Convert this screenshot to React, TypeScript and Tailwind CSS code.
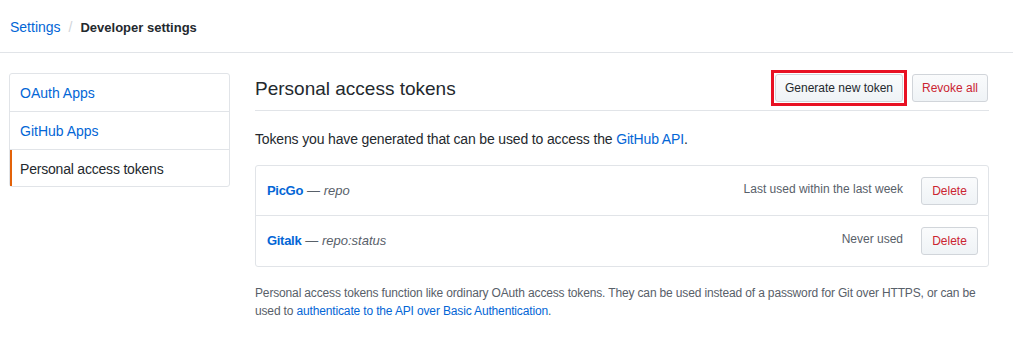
import React from "react";

const font = { fontFamily: '"Liberation Sans", Arial, sans-serif' };

function Btn({ children, danger, className = "" }: { children: React.ReactNode; danger?: boolean; className?: string }) {
  return (
    <button
      className={
        "h-[28px] rounded-[3px] border border-[#d1d5da] bg-gradient-to-b from-[#fafbfc] to-[#eff3f6] text-[12px] leading-[20px] flex items-center justify-center shrink-0 " +
        (danger ? "text-[#cb2431] " : "text-[#24292e] ") +
        className
      }
    >
      {children}
    </button>
  );
}

export default function App() {
  const tokens = [
    { name: "PicGo", scope: "repo", used: "Last used within the last week" },
    { name: "Gitalk", scope: "repo:status", used: "Never used" },
  ];
  return (
    <div className="w-[1013px] h-[347px] bg-white text-[#24292e] overflow-hidden" style={font}>
      <div className="h-[53px] border-b border-[#e1e4e8] flex items-center pl-[10px] text-[14px] pt-[3px]">
        <span className="text-[#0366d6]">Settings</span>
        <span className="mx-[8px] text-[#d1d5da]">/</span>
        <span className="font-bold text-[13px]">Developer settings</span>
      </div>
      <div className="flex pl-[9px] pt-[20px]">
        <div className="w-[221px] shrink-0 self-start border border-[#e1e4e8] rounded-[3px] text-[14px]">
          <div className="h-[38px] flex items-center pl-[10px] pt-[2px] border-b border-[#e1e4e8] text-[#0366d6]">OAuth Apps</div>
          <div className="h-[38px] flex items-center pl-[10px] pt-[2px] border-b border-[#e1e4e8] text-[#0366d6]">GitHub Apps</div>
          <div className="h-[36px] flex items-center pl-[8px] pt-[2px] border-l-[2px] border-[#e36209] text-[#24292e] tracking-[-0.2px]">Personal access tokens</div>
        </div>
        <div className="ml-[25px] w-[734px]">
          <div className="flex items-center justify-between pt-[1px] pb-[8px] border-b border-[#e1e4e8]">
            <h2 className="text-[19px] font-normal leading-[26px] mt-[2px]">Personal access tokens</h2>
            <div className="flex items-center">
              <div className="border-[3px] border-[#e81123] p-[1px] -m-[4px]">
                <Btn className="w-[128px]">Generate new token</Btn>
              </div>
              <Btn danger className="w-[76px] ml-[9px] mr-[1px]">Revoke all</Btn>
            </div>
          </div>
          <p className="text-[14px] mt-[18px] leading-[20px] tracking-[-0.15px]">
            Tokens you have generated that can be used to access the{" "}
            <span className="text-[#0366d6]">GitHub API</span>.
          </p>
          <div className="mt-[16px] border border-[#e1e4e8] rounded-[3px] w-[734px]">
            {tokens.map((t, i) => (
              <div
                key={t.name}
                className={
                  "h-[50px] flex items-center pl-[11px] pr-[10px] " + (i === 0 ? "border-b border-[#e1e4e8]" : "")
                }
              >
                <span className="text-[13px] font-bold text-[#0366d6] tracking-[-0.3px]">{t.name}</span>
                <span className="text-[13px] text-[#586069] ml-[4px]">
                  — <em>{t.scope}</em>
                </span>
                <span className="ml-auto text-[12px] text-[#586069] mr-[18px] -mt-[4px]">{t.used}</span>
                <Btn danger className="w-[57px] h-[27px]">Delete</Btn>
              </div>
            ))}
          </div>
          <p className="text-[12px] leading-[18px] text-[#586069] mt-[17px] tracking-[-0.15px]">
            <span className="whitespace-nowrap">
              Personal access tokens function like ordinary OAuth access tokens. They can be used instead of a password for Git over HTTPS, or can be
            </span>
            <br />
            used to <span className="text-[#0366d6]">authenticate to the API over Basic Authentication</span>.
          </p>
        </div>
      </div>
    </div>
  );
}
